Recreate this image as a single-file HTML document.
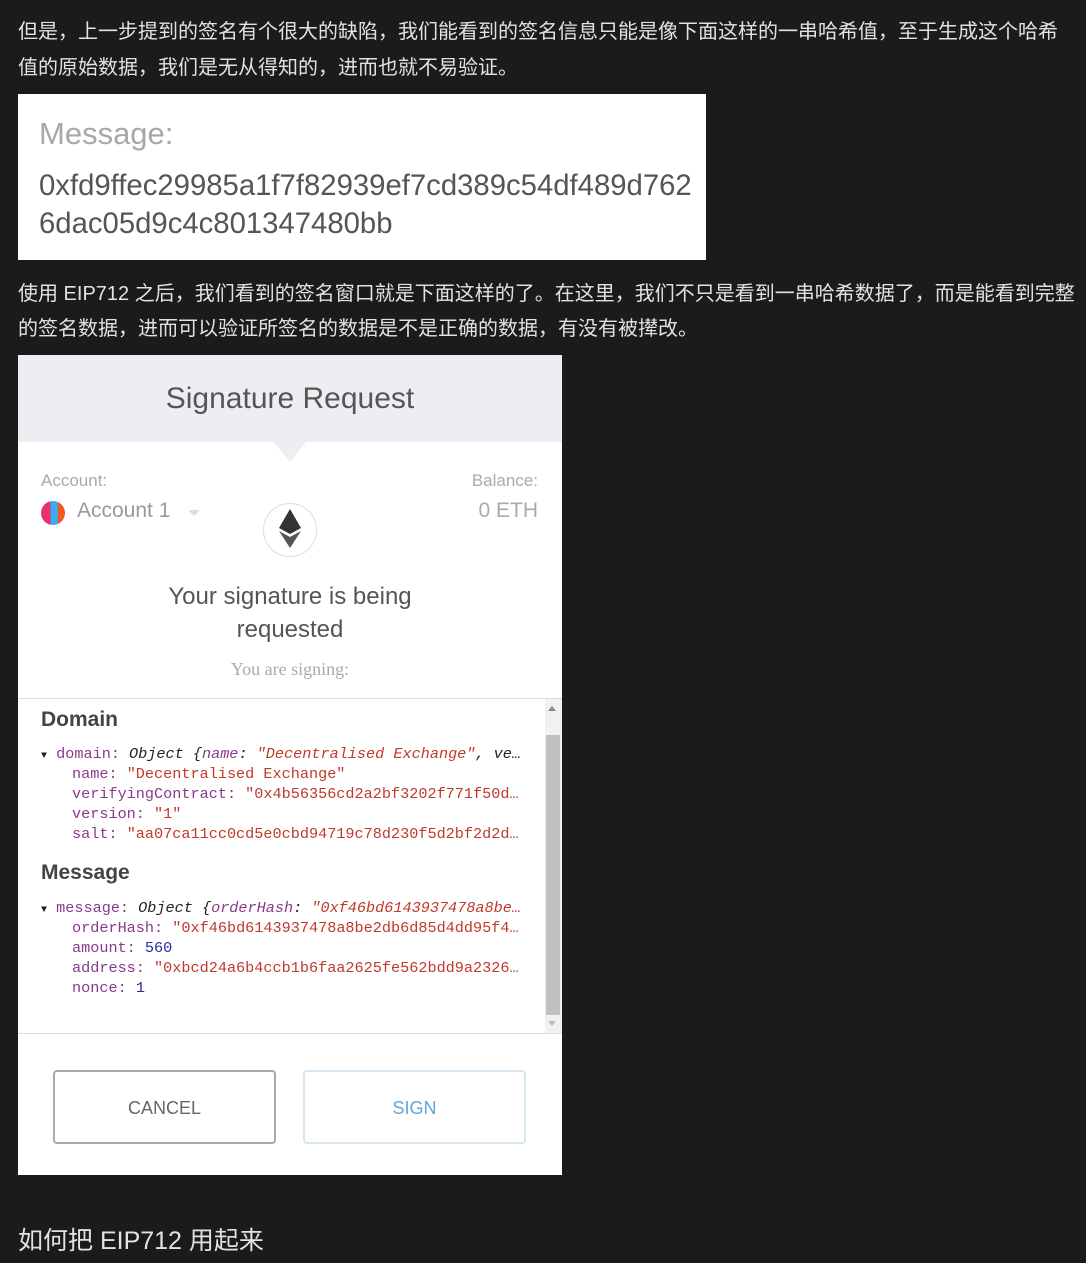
<!DOCTYPE html>
<html><head><meta charset="utf-8"><style>
body{margin:0;width:1086px;height:1263px;background:#1b1b1d;position:relative;overflow:hidden;font-family:"Liberation Sans","Noto Sans CJK SC",sans-serif}
.a{position:absolute;white-space:nowrap}
.p{color:#e2e2e2;font-size:20px;left:18px}
.mono{font-family:"Liberation Mono","DejaVu Sans Mono",monospace;font-size:15.2px;position:absolute;white-space:nowrap;color:#8a3a8a}
.s{color:#c0392b}.n{color:#2a2aa8}.k{color:#222}
</style></head><body>
<div class="a p" style="top:15px">但是，上一步提到的签名有个很大的缺陷，我们能看到的签名信息只能是像下面这样的一串哈希值，至于生成这个哈希</div>
<div class="a p" style="top:51px">值的原始数据，我们是无从得知的，进而也就不易验证。</div>
<div class="a" style="left:18px;top:94px;width:688px;height:166px;background:#fff">
 <div class="a" style="left:21px;top:22px;font-size:31px;color:#a8a8a8">Message:</div>
 <div class="a" style="left:21px;top:75px;font-size:29.3px;color:#555">0xfd9ffec29985a1f7f82939ef7cd389c54df489d762</div>
 <div class="a" style="left:21px;top:113px;font-size:29.3px;color:#555">6dac05d9c4c801347480bb</div>
</div>
<div class="a p" style="top:277px">使用 EIP712 之后，我们看到的签名窗口就是下面这样的了。在这里，我们不只是看到一串哈希数据了，而是能看到完整</div>
<div class="a p" style="top:312px">的签名数据，进而可以验证所签名的数据是不是正确的数据，有没有被撵改。</div>
<div class="a" style="left:18px;top:355px;width:544px;height:820px;background:#fff;overflow:hidden">
 <div class="a" style="left:0;top:0;width:544px;height:87px;background:#eceef1"></div>
 <div class="a" style="left:256px;top:87px;width:0;height:0;border-left:16px solid transparent;border-right:16px solid transparent;border-top:20px solid #eceef1"></div>
 <div class="a" style="left:0;width:544px;top:27px;text-align:center;font-size:30px;color:#555">Signature Request</div>
 <div class="a" style="left:23px;top:116px;font-size:17px;color:#aaa">Account:</div>
 <div class="a" style="left:23px;top:146px;width:24px;height:24px;border-radius:50%;background:linear-gradient(90deg,#e8326a 0 40%,#3ea9f0 40% 70%,#f05a1c 70%)"></div>
 <div class="a" style="left:59px;top:144px;font-size:21px;color:#999">Account 1</div>
 <div class="a" style="left:170px;top:155px;border-left:6px solid transparent;border-right:6px solid transparent;border-top:6px solid #ddd"></div>
 <div class="a" style="right:24px;top:116px;font-size:17px;color:#aaa">Balance:</div>
 <div class="a" style="right:24px;top:144px;font-size:21px;color:#aaa">0 ETH</div>
 <div class="a" style="left:245px;top:148px;width:52px;height:52px;border:1px solid #ddd;border-radius:50%"></div>
 <svg class="a" style="left:260px;top:153px" width="24" height="42" viewBox="0 0 24 42"><path d="M12 1L1 20 12 26 23 20Z" fill="#333"/><path d="M1 23L12 40 23 23 12 29Z" fill="#555"/></svg>
 <div class="a" style="left:0;width:544px;top:225px;text-align:center;font-size:24px;color:#555;white-space:normal;line-height:33px">Your signature is being<br>requested</div>
 <div class="a" style="left:0;width:544px;top:304px;text-align:center;font-size:18px;color:#aaa;font-family:'Liberation Serif',serif">You are signing:</div>
 <div class="a" style="left:0;top:343px;width:544px;height:1px;background:#ddd"></div>
 <div class="a" style="left:527px;top:344px;width:17px;height:334px;background:#f1f1f1"></div>
 <div class="a" style="left:528px;top:380px;width:14px;height:280px;background:#c1c1c1"></div>
 <div class="a" style="left:530px;top:351px;border-left:4px solid transparent;border-right:4px solid transparent;border-bottom:5px solid #888"></div>
 <div class="a" style="left:530px;top:666px;border-left:4px solid transparent;border-right:4px solid transparent;border-top:5px solid #bbb"></div>
 <div class="a" style="left:23px;top:353px;font-size:21px;font-weight:bold;color:#444">Domain</div>
 <div class="mono" style="left:23px;top:390px"><span class="k" style="font-size:10px">▼</span> domain: <i class="k">Object {<span style="color:#8a3a8a">name</span>: <span class="s">"Decentralised Exchange"</span>, ve…</i></div>
 <div class="mono" style="left:54px;top:410px">name: <span class="s">"Decentralised Exchange"</span></div>
 <div class="mono" style="left:54px;top:430px">verifyingContract: <span class="s">"0x4b56356cd2a2bf3202f771f50d…</span></div>
 <div class="mono" style="left:54px;top:450px">version: <span class="s">"1"</span></div>
 <div class="mono" style="left:54px;top:470px">salt: <span class="s">"aa07ca11cc0cd5e0cbd94719c78d230f5d2bf2d2d…</span></div>
 <div class="a" style="left:23px;top:506px;font-size:21px;font-weight:bold;color:#444">Message</div>
 <div class="mono" style="left:23px;top:544px"><span class="k" style="font-size:10px">▼</span> message: <i class="k">Object {<span style="color:#8a3a8a">orderHash</span>: <span class="s">"0xf46bd6143937478a8be…</span></i></div>
 <div class="mono" style="left:54px;top:564px">orderHash: <span class="s">"0xf46bd6143937478a8be2db6d85d4dd95f4…</span></div>
 <div class="mono" style="left:54px;top:584px">amount: <span class="n">560</span></div>
 <div class="mono" style="left:54px;top:604px">address: <span class="s">"0xbcd24a6b4ccb1b6faa2625fe562bdd9a2326…</span></div>
 <div class="mono" style="left:54px;top:624px">nonce: <span class="n">1</span></div>
 <div class="a" style="left:0;top:678px;width:544px;height:1px;background:#ddd"></div>
 <div class="a" style="left:35px;top:715px;width:219px;height:70px;border:2px solid #aaa;border-radius:4px;text-align:center;line-height:72px;font-size:18px;color:#666">CANCEL</div>
 <div class="a" style="left:285px;top:715px;width:219px;height:70px;border:2px solid #d6e6f0;border-radius:4px;text-align:center;line-height:72px;font-size:18px;color:#5fa8d6">SIGN</div>
</div>
<div class="a" style="left:18px;top:1221px;font-size:25px;color:#e2e2e2">如何把 EIP712 用起来</div>
</body></html>
